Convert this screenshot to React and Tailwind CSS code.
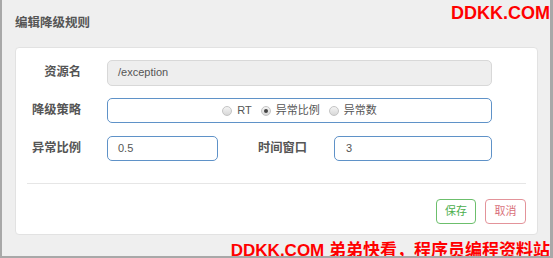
import React from "react";

const font = { fontFamily: '"Liberation Sans", "Noto Sans CJK SC", sans-serif' };

function Radio({ checked, label }) {
  return (
    <label className="flex items-center gap-[5px]">
      <span className="relative flex h-[10px] w-[10px] items-center justify-center rounded-full border border-[#c4c4c4] bg-gradient-to-b from-[#f4f4f4] to-[#d8d8d8]">
        {checked && <span className="h-[4px] w-[4px] rounded-full bg-[#444]" />}
      </span>
      <span>{label}</span>
    </label>
  );
}

export default function App() {
  return (
    <div
      className="relative flex h-[258px] w-[553px] flex-col overflow-hidden border-l-[2px] border-r-[3px] border-b-[2px] border-[#a8a8a8] bg-[#efefef] text-[#555]"
      style={font}
    >
      <div className="flex h-[47px] items-center pl-[13px] pb-[1px]">
        <span className="text-[12.5px] font-bold text-[#555]">编辑降级规则</span>
      </div>

      <div className="ml-[13px] mr-[12px] flex h-[188px] flex-col rounded-[4px] border border-[#e2e2e2] bg-white px-[11px] pt-[12px]">
        <div className="flex flex-col gap-[13px] pr-[34px]">
          <div className="flex h-[25px] items-center">
            <span className="w-[54px] text-right text-[12.25px] font-bold">资源名</span>
            <div className="ml-[26px] flex h-[26px] flex-1 items-center rounded-[5px] border border-[#d8d8d8] bg-[#eeeeee] px-[10px] text-[11px] text-[#555]">
              /exception
            </div>
          </div>
          <div className="flex h-[25px] items-center">
            <span className="w-[54px] text-right text-[12.25px] font-bold">降级策略</span>
            <div className="ml-[26px] flex h-[25px] flex-1 items-center justify-center gap-[9px] rounded-[5px] border border-[#5f92c8] bg-white text-[11px] text-[#555]">
              <Radio label="RT" />
              <Radio checked label="异常比例" />
              <Radio label="异常数" />
            </div>
          </div>
          <div className="flex h-[25px] items-center">
            <span className="w-[54px] text-right text-[12.25px] font-bold">异常比例</span>
            <div className="ml-[26px] flex h-[25px] w-[111px] items-center rounded-[5px] border border-[#5f92c8] bg-white px-[10px] text-[11px]">
              0.5
            </div>
            <span className="ml-[40px] w-[52px] text-[12.25px] font-bold">时间窗口</span>
            <div className="ml-[24px] flex h-[25px] flex-1 items-center rounded-[5px] border border-[#5f92c8] bg-white px-[11px] text-[11px]">
              3
            </div>
          </div>
        </div>

        <div className="mt-[22px] h-px bg-[#e6e6e6]" />

        <div className="mt-[15px] flex justify-end gap-[9px]">
          <button className="flex h-[25px] w-[40px] items-center justify-center rounded-[4px] border border-[#6cbf6c] bg-white text-[11px] text-[#4cae4c]">
            保存
          </button>
          <button className="flex h-[25px] w-[41px] items-center justify-center rounded-[4px] border border-[#e3939a] bg-white text-[11px] text-[#d9707a]">
            取消
          </button>
        </div>
      </div>

      <div className="absolute right-0 top-[4px] text-[18px] font-bold leading-[18px] text-[#ff0000]">
        DDKK.COM
      </div>
      <div className="absolute bottom-[-5px] right-0 whitespace-nowrap text-[17px] font-bold leading-[20px] text-[#ff0000]">
        DDKK.COM 弟弟快看，程序员编程资料站
      </div>
    </div>
  );
}
